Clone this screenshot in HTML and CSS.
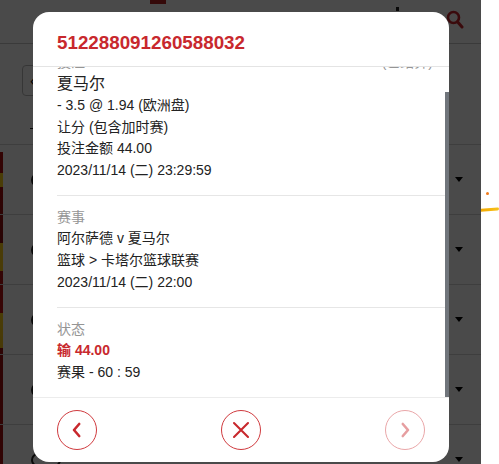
FILE: index.html
```html
<!DOCTYPE html>
<html lang="zh-CN">
<head>
<meta charset="utf-8">
<title>注单详情</title>
<link rel="stylesheet" href="styles.css">
</head>
<body>
<div class="screen">
  <div class="page">
    <div class="topbar">
      <span class="logo-bit"></span>
      <span class="mark"></span>
      <svg class="search" width="18" height="20" viewBox="0 0 18 20" aria-hidden="true">
        <circle cx="7.5" cy="7.5" r="5.5" fill="none" stroke="#c8242a" stroke-width="2.6"/>
        <path d="M11.5 11.8 L16 17" stroke="#c8242a" stroke-width="3" stroke-linecap="round"/>
      </svg>
    </div>
    <div class="filters">
      <div class="select"><span class="select-arrow">‹</span></div>
      <span class="tab-sep"></span>
    </div>
    <div class="rows">
      <div class="row"><span class="ring"></span><span class="caret"></span></div>
      <div class="row"><span class="ring"></span><span class="caret"></span></div>
      <div class="row"><span class="ring"></span><span class="caret"></span></div>
      <div class="row"><span class="ring"></span><span class="caret"></span></div>
      <div class="row"><span class="ring"></span><span class="caret"></span></div>
    </div>
    <div class="overlay"></div>
    <div class="modal">
      <div class="modal-head">
        <h2 class="order-no">512288091260588032</h2>
      </div>
      <div class="modal-body">
        <div class="scroll-inner">
          <section class="block">
            <div class="block-head"><span class="label">投注</span><span class="label">(已结算)</span></div>
            <div class="pick">夏马尔</div>
            <div class="line">- 3.5 @ 1.94 (欧洲盘)</div>
            <div class="line">让分 (包含加时赛)</div>
            <div class="line">投注金额 44.00</div>
            <div class="line">2023/11/14 (二) 23:29:59</div>
          </section>
          <section class="block">
            <div class="label">赛事</div>
            <div class="line">阿尔萨德 v 夏马尔</div>
            <div class="line">篮球 &gt; 卡塔尔篮球联赛</div>
            <div class="line">2023/11/14 (二) 22:00</div>
          </section>
          <section class="block">
            <div class="label">状态</div>
            <div class="line lost">输 44.00</div>
            <div class="line">赛果 - 60 : 59</div>
          </section>
        </div>
      </div>
      <span class="scroll-thumb"></span>
      <div class="modal-foot">
        <button class="nav-btn" aria-label="上一个">
          <svg width="16" height="16" viewBox="0 0 16 16"><path d="M10.2 2 L5 8 L10.2 14" fill="none" stroke="#c8282d" stroke-width="2.6" stroke-linecap="round" stroke-linejoin="round"/></svg>
        </button>
        <button class="nav-btn" aria-label="关闭">
          <svg width="18" height="18" viewBox="0 0 18 18"><path d="M2 2 L16 16 M16 2 L2 16" fill="none" stroke="#c8282d" stroke-width="2.1" stroke-linecap="round"/></svg>
        </button>
        <button class="nav-btn disabled" aria-label="下一个">
          <svg width="16" height="16" viewBox="0 0 16 16"><path d="M5.8 2 L11 8 L5.8 14" fill="none" stroke="#c8282d" stroke-width="2.6" stroke-linecap="round" stroke-linejoin="round"/></svg>
        </button>
      </div>
    </div>
  </div>
  <div class="side">
    <span class="dot"></span>
    <span class="streak"></span>
  </div>
</div>
</body>
</html>
```
FILE: styles.css
```css
* { box-sizing: border-box; }
html, body { margin: 0; padding: 0; background: #fff; }
body {
  font-family: "Liberation Sans", "Noto Sans CJK SC", sans-serif;
  color: #222;
}
.screen { display: flex; width: 499px; height: 464px; overflow: hidden; }

/* background page */
.page { position: relative; width: 481px; height: 464px; overflow: hidden; background: #fff; flex: none; }
.topbar {
  height: 44px;
  border-bottom: 1px solid #c9c9c9;
  display: flex;
  align-items: flex-start;
}
.logo-bit { width: 16px; height: 4px; margin-left: 150px; background: #b52020; }
.mark { width: 3px; height: 4px; margin: 7px 0 0 230px; background: #222; }
.search { margin: 10px 0 0 auto; margin-right: 17px; }
.filters { height: 100px; position: relative; padding: 21px 0 0 22px; }
.select {
  width: 200px; height: 31px;
  border: 1px solid #bbb; border-radius: 4px;
  display: flex; align-items: center; padding-left: 7px;
  color: #111; font-size: 16px;
}
.tab-sep { display: block; width: 6px; height: 1px; margin: 32px 0 0 8px; background: #222; }
.rows {
  background:
    linear-gradient(#b01010 0, #b01010 6%, #ffd21a 6%, #ffd21a 10%, #a80d0d 10%, #8a1010 26%, #ffcf1a 26%, #ffcf1a 34%, #b01515 34%, #c21212 46%, #ffd21a 46%, #f7c51a 56%, #9c1010 56%, #b01010 100%) no-repeat 0 8px / 3px 100%,
    #fff;
}
.row {
  height: 70px;
  border-top: 1px solid #d6d6d6;
  display: flex;
  align-items: center;
}
.ring { width: 30px; height: 14px; margin-left: 31px; border: 2px solid #222; border-radius: 8px; }
.caret {
  margin: 0 18px 0 auto;
  width: 0; height: 0;
  border-left: 4px solid transparent;
  border-right: 4px solid transparent;
  border-top: 5px solid #000;
}
.overlay { position: absolute; inset: 0; background: rgba(0, 0, 0, 0.71); }

.side { width: 18px; display: flex; flex-direction: column; }
.dot { width: 3px; height: 3px; border-radius: 50%; background: #f07a1a; margin: 192px 0 0 5px; }
.streak {
  width: 18px; height: 3px; margin-top: 13px;
  background: linear-gradient(90deg, #f2a900, #f7c21c);
  border-radius: 0 2px 2px 0;
  transform: skewY(-4deg);
}

/* modal */
.modal {
  position: absolute;
  left: 33px; top: 12px;
  width: 416px; height: 450px;
  background: #fff;
  border-radius: 16px;
  overflow: hidden;
  display: flex;
  flex-direction: column;
}
.modal-head { padding: 20px 24px 12px; border-bottom: 1px solid #e4e4e4; flex: none; }
.order-no {
  margin: 0;
  font-size: 18.8px;
  line-height: 22px;
  font-weight: 700;
  color: #c8282d;
}
.modal-body {
  flex: 1;
  min-height: 0;
  overflow-y: auto;
  scrollbar-width: none;
  display: flex;
  flex-direction: column-reverse;
}
.modal-body::-webkit-scrollbar { width: 0; height: 0; }
.scroll-inner { flex: none; }
.scroll-thumb {
  position: absolute;
  right: 0; top: 80px;
  width: 4px; height: 305px;
  background: #70757b;
}
.block {
  margin: 0 4px 0 24px;
  padding: 11px 12px 13.5px 0;
  border-bottom: 1px solid #e6e6e6;
  font-size: 14px;
  line-height: 21.6px;
}
.block:last-child { border-bottom: 0; }
.block-head { display: flex; justify-content: space-between; }
.label { color: #959595; }
.pick { font-size: 16px; color: #222; }
.line { color: #222; }
.lost { color: #c8282d; font-weight: 700; }

.modal-foot {
  flex: none;
  border-top: 1px solid #ececec;
  padding: 12px 24px;
  display: flex;
  justify-content: space-between;
}
.nav-btn {
  width: 40px; height: 40px;
  border: 1px solid #cf3a3e;
  border-radius: 50%;
  background: #fff;
  padding: 0;
  display: flex;
  align-items: center;
  justify-content: center;
}
.nav-btn.disabled { opacity: 0.45; }
```
